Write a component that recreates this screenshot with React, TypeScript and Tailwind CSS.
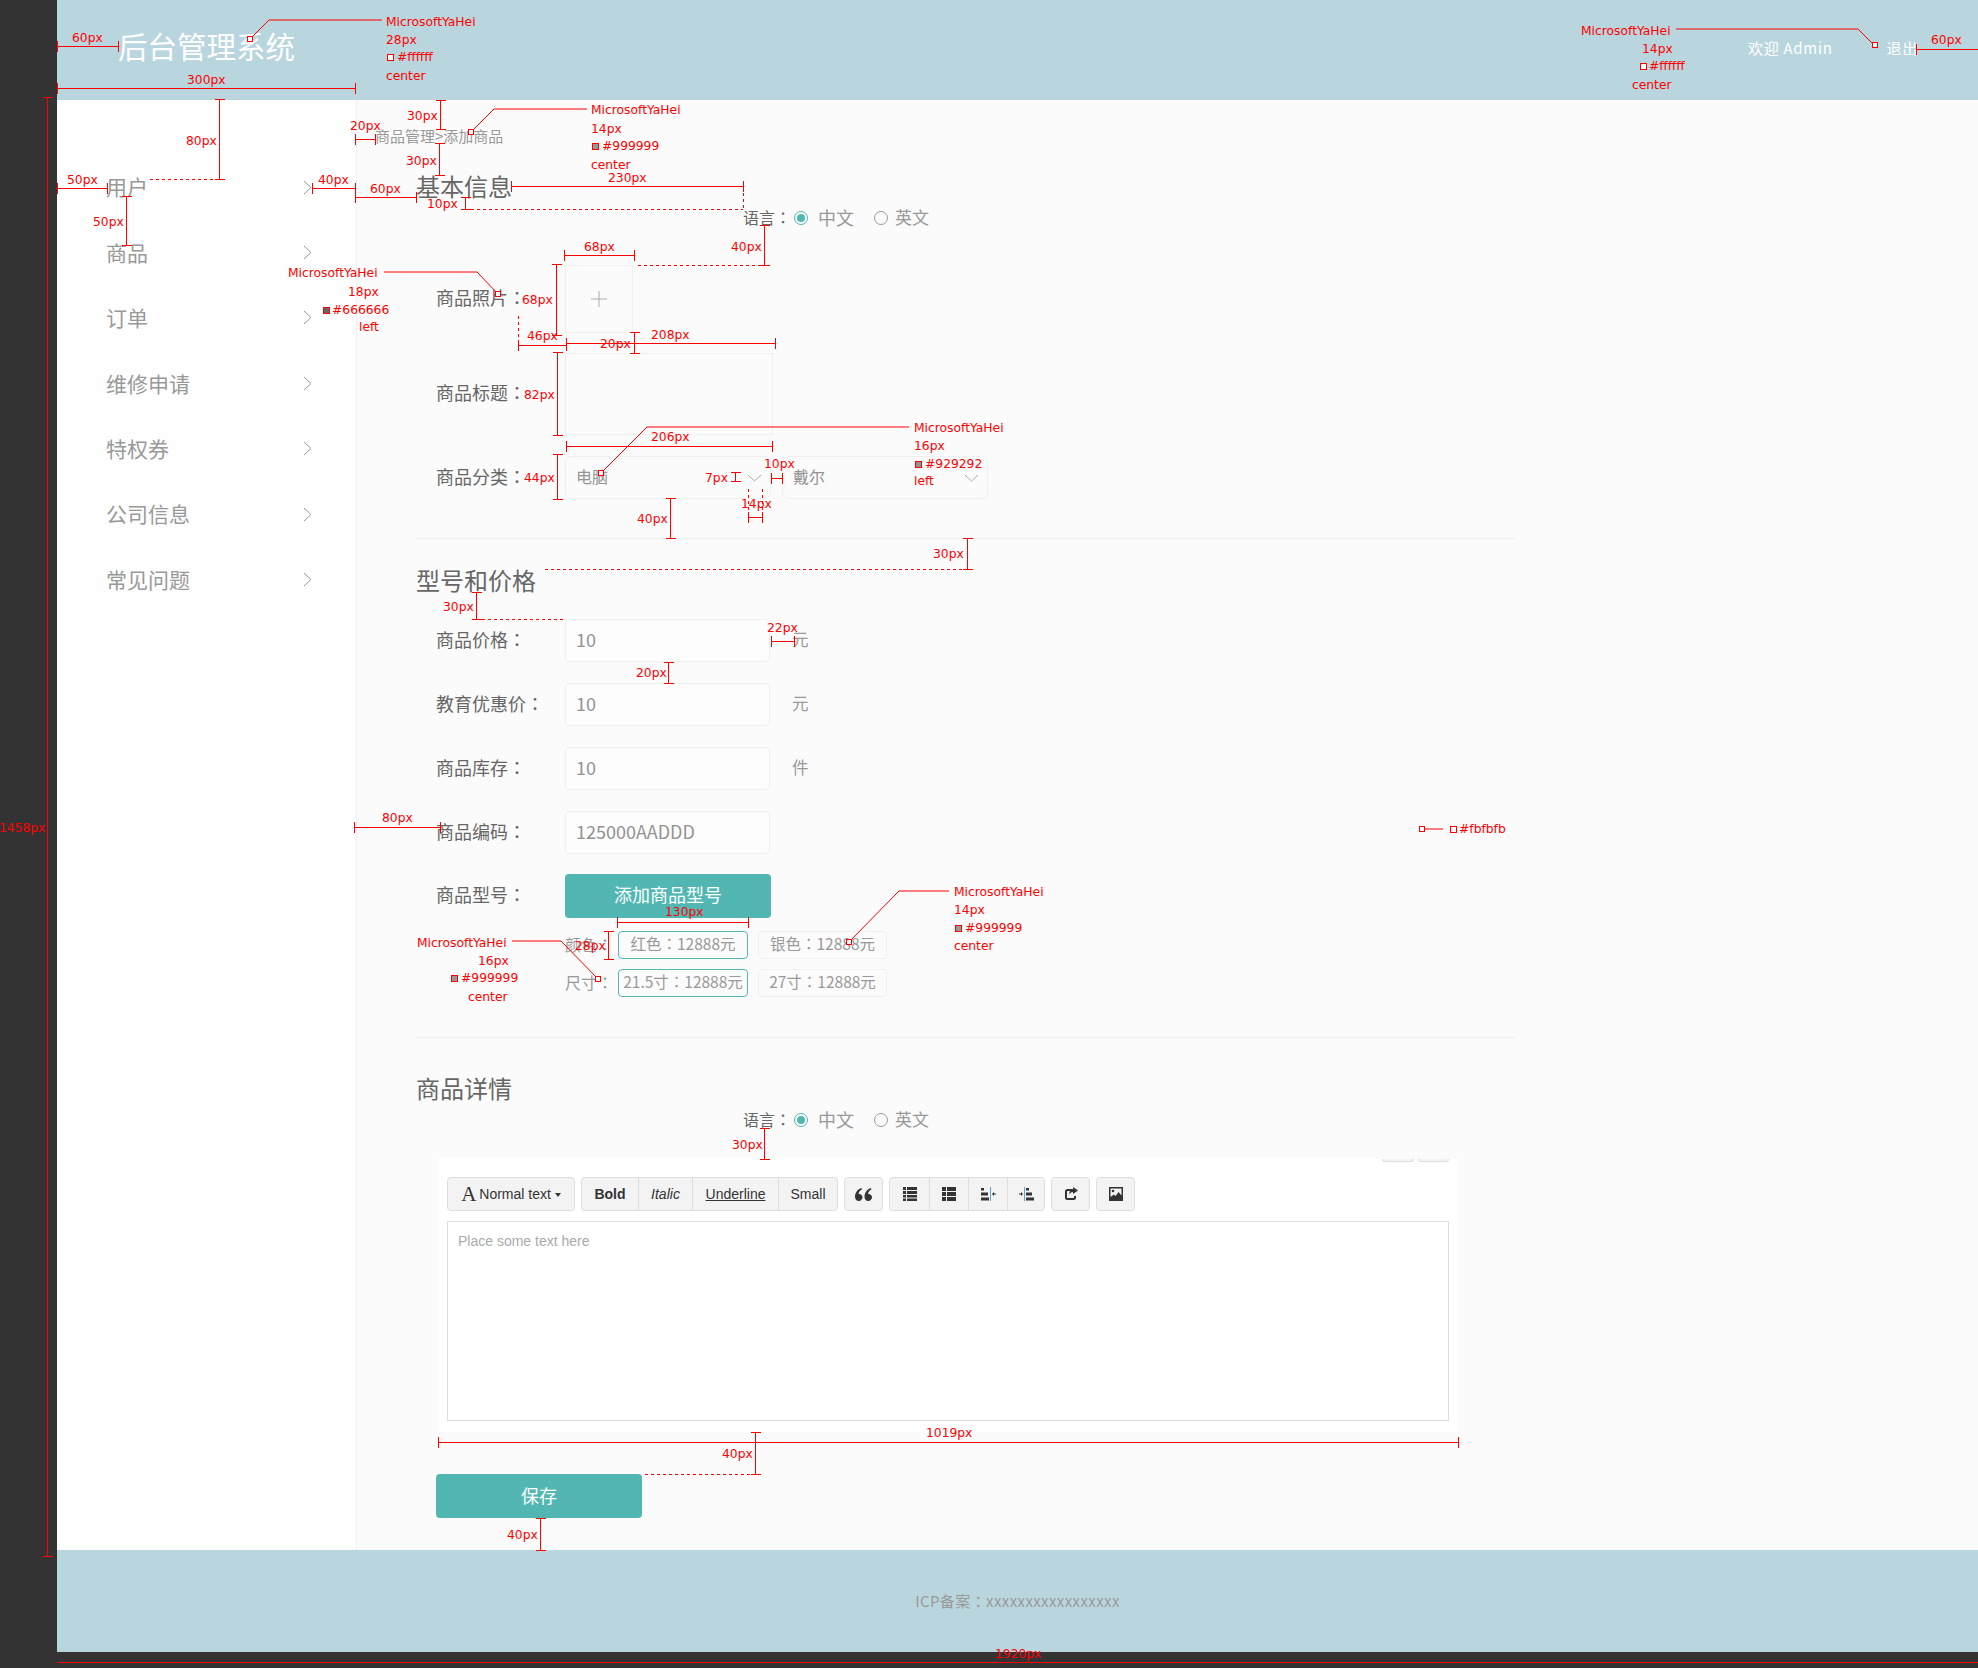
import React from 'react';

const sideItems = ['用户', '商品', '订单', '维修申请', '特权券', '公司信息', '常见问题'];

// red measuring marks laid over the design
type Label = [number, number, string];
const labels: Label[] = [
  [72, 38, '60px'], [386, 22, 'MicrosoftYaHei'], [386, 40, '28px'], [397, 57, '#ffffff'], [386, 76, 'center'], [187, 80, '300px'],
  [1581, 31, 'MicrosoftYaHei'], [1642, 49, '14px'], [1649, 66, '#ffffff'], [1632, 85, 'center'], [1931, 40, '60px'],
  [350, 126, '20px'], [407, 116, '30px'], [406, 161, '30px'], [591, 110, 'MicrosoftYaHei'], [591, 129, '14px'], [602, 146, '#999999'], [591, 165, 'center'],
  [67, 180, '50px'], [93, 222, '50px'], [186, 141, '80px'], [318, 180, '40px'], [370, 189, '60px'], [608, 178, '230px'], [427, 204, '10px'],
  [731, 247, '40px'], [584, 247, '68px'], [288, 273, 'MicrosoftYaHei'], [348, 292, '18px'], [332, 310, '#666666'], [359, 327, 'left'],
  [522, 300, '68px'], [527, 336, '46px'], [600, 344, '20px'], [651, 335, '208px'], [524, 395, '82px'], [651, 437, '206px'],
  [914, 428, 'MicrosoftYaHei'], [914, 446, '16px'], [925, 464, '#929292'], [914, 481, 'left'],
  [524, 478, '44px'], [705, 478, '7px'], [764, 464, '10px'], [741, 504, '14px'], [637, 519, '40px'], [933, 554, '30px'], [443, 607, '30px'],
  [767, 628, '22px'], [636, 673, '20px'], [382, 818, '80px'], [-1, 828, '1458px'], [1459, 829, '#fbfbfb'],
  [665, 912, '130px'], [575, 946, '28px'], [417, 943, 'MicrosoftYaHei'], [478, 961, '16px'], [461, 978, '#999999'], [468, 997, 'center'],
  [954, 892, 'MicrosoftYaHei'], [954, 910, '14px'], [965, 928, '#999999'], [954, 946, 'center'],
  [732, 1145, '30px'], [926, 1433, '1019px'], [722, 1454, '40px'], [507, 1535, '40px'], [995, 1654, '1920px'],
];

const hDims: [number, number, number][] = [
  [57, 118, 46], [57, 355, 88], [1916, 1978, 49], [355, 375, 139], [57, 107, 188], [312, 355, 188], [355, 416, 197], [511, 743, 186],
  [564, 634, 255], [518, 566, 345], [566, 775, 343], [566, 772, 446], [771, 782, 478], [748, 762, 517], [771, 794, 641], [354, 440, 827],
  [617, 748, 922], [438, 1458, 1442],
];
const vDims: [number, number, number][] = [
  [47, 97, 1556], [440, 100, 129], [439, 143, 175], [126, 196, 245], [219, 99, 179], [465, 197, 209], [764, 225, 265], [556, 264, 335], [634, 332, 353],
  [557, 352, 435], [557, 454, 499], [735, 472, 481], [670, 498, 538], [967, 538, 569], [476, 592, 619], [668, 662, 683], [608, 931, 959],
  [764, 1128, 1159], [755, 1432, 1474], [540, 1518, 1550],
];
const dashes: [number, number, number, number][] = [
  [150, 179, 219, 179], [465, 209, 743, 209], [743, 186, 743, 209], [638, 265, 764, 265], [518, 315, 518, 345], [748, 488, 748, 510], [762, 488, 762, 510],
  [545, 569, 966, 569], [476, 619, 563, 619], [645, 1474, 755, 1474],
];
const leaders: string[] = [
  '250,39 269,20 382,20', '1676,29 1858,29 1873,44', '471,132 494,109 587,109', '384,272 477,272 498,294',
  '601,473 647,427 909,427', '512,941 561,941 598,979', '849,942 899,891 949,891', '1424,829 1443,829',
];
const dots: [number, number][] = [[250, 39], [1875, 45], [471, 132], [498, 294], [601, 473], [598, 979], [849, 942], [1422, 829]];
const swatches: [number, number, string][] = [
  [390, 57, '#ffffff'], [1643, 66, '#ffffff'], [595, 146, '#999999'], [326, 310, '#666666'], [918, 464, '#929292'],
  [1453, 829, '#fbfbfb'], [454, 978, '#999999'], [958, 928, '#999999'],
];

const Annotations: React.FC = () => (
  <div className="absolute inset-0 pointer-events-none overflow-hidden">
    <svg width="1978" height="1668" className="absolute inset-0">
      <g stroke="#ff0000" strokeWidth="1" fill="none" shapeRendering="crispEdges">
        {hDims.map(([a, b, y], i) => (
          <path key={i} d={`M${a} ${y + 0.5}H${b}M${a + 0.5} ${y - 5}v11M${b + 0.5} ${y - 5}v11`} />
        ))}
        {vDims.map(([x, a, b], i) => (
          <path key={i} d={`M${x + 0.5} ${a}V${b}M${x - 4} ${a + 0.5}h10M${x - 4} ${b + 0.5}h10`} />
        ))}
        {dashes.map(([x1, y1, x2, y2], i) => (
          <line key={i} x1={x1} y1={y1 + 0.5} x2={x2} y2={y2 + 0.5} strokeDasharray="3 3" />
        ))}
        <path d="M57 1662.5H1978" />
      </g>
      <g stroke="#ff0000" strokeWidth="1" fill="none">
        {leaders.map((p, i) => (
          <polyline key={i} points={p} />
        ))}
      </g>
      <g stroke="#ff0000" strokeWidth="1" shapeRendering="crispEdges">
        {dots.map(([x, y], i) => (
          <rect key={i} x={x - 2.5} y={y - 2.5} width="5" height="5" fill="#fbfbfb" />
        ))}
        {swatches.map(([x, y, c], i) => (
          <rect key={i} x={x - 2.5} y={y - 2.5} width="6" height="6" fill={c} />
        ))}
      </g>
    </svg>
    {labels.map(([x, y, t], i) => (
      <span
        key={i}
        className="absolute -translate-y-1/2 whitespace-nowrap text-[12.3px] leading-none text-[#ff0000] font-['DejaVu_Sans',sans-serif]"
        style={{ left: x, top: y }}
      >
        {t}
      </span>
    ))}
  </div>
);

const Chevron: React.FC = () => (
  <svg width="9" height="15" viewBox="0 0 9 15" fill="none" stroke="#999" strokeWidth="1">
    <path d="M1 1l7 6.5L1 14" />
  </svg>
);

const Down: React.FC = () => (
  <svg width="15" height="8" viewBox="0 0 15 8" fill="none" stroke="#aaa" strokeWidth="1">
    <path d="M1 1l6.5 6L14 1" />
  </svg>
);

const Colon: React.FC = () => <span className="font-['Noto_Sans_CJK_TC',sans-serif]">：</span>;

const Heading: React.FC<{ children: React.ReactNode; className?: string }> = ({ children, className }) => (
  <h2 className={`h-8 text-[24px] leading-[30px] text-[#666] ${className}`}>{children}</h2>
);

const LangRow: React.FC = () => (
  <div className="h-6 mt-[3px] pb-[2px] ml-[327px] flex items-center text-[18px] text-[#999]">
    <span className="text-[16px] w-[51px] text-[#666]">语言<Colon /></span>
    <span className="w-[14px] h-[14px] mt-[2px] rounded-full border border-[#52b7b3] flex items-center justify-center">
      <span className="w-2 h-2 rounded-full bg-[#52b7b3]" />
    </span>
    <span className="ml-[10px]">中文</span>
    <span className="ml-5 mt-[2px] w-[14px] h-[14px] rounded-full border border-[#999]" />
    <span className="ml-[7px] text-[17px]">英文</span>
  </div>
);

const FormRow: React.FC<{ label: string; className?: string; children: React.ReactNode }> = ({ label, className, children }) => (
  <div className={`ml-5 flex items-center ${className}`}>
    <span className="w-[129px] shrink-0 pb-[3px] text-[18px] text-[#666]">{label}<Colon /></span>
    {children}
  </div>
);

const InputRow: React.FC<{ label: string; value: string; unit?: string }> = ({ label, value, unit }) => (
  <FormRow label={label}>
    <div className="w-[205px] h-[43px] px-[10px] pb-[2px] flex items-center rounded-[4px] border border-[#f0f0f0] bg-[#fdfdfd] text-[18px] text-[#929292]">{value}</div>
    {unit && <span className="ml-[22px] pb-[2px] text-[16.500px] text-[#999]">{unit}</span>}
  </FormRow>
);

const Select: React.FC<{ value: string; className?: string }> = ({ value, className }) => (
  <div className={`w-[206px] h-[43px] pl-[10px] pr-2 flex items-center justify-between rounded-[6px] border border-[#f0f0f0] text-[16px] text-[#929292] ${className}`}>
    <span className="pb-[3px]">{value}</span>
    <Down />
  </div>
);

const Chip: React.FC<{ name: string; price: string; active?: boolean }> = ({ name, price, active }) => (
  <span className={`h-7 pb-[2px] flex items-center justify-center rounded-[4px] border text-[15.500px] text-[#999] whitespace-nowrap ${active ? 'w-[130px] border-[#52b7b3]' : 'w-[129px] ml-[10px] border-[#f0f0f0]'}`}>
    {name}<Colon />{price}
  </span>
);

const ToolBtn: React.FC<{ children: React.ReactNode; className?: string }> = ({ children, className }) => (
  <span className={`h-full flex items-center justify-center border-l border-[#ddd] first:border-l-0 ${className}`}>{children}</span>
);

const ToolGroup: React.FC<{ children: React.ReactNode }> = ({ children }) => (
  <div className="h-full flex rounded-[4px] border border-[#ddd] bg-[#f3f3f3] text-[#333]">{children}</div>
);

// glyphicon style drawings
const IconQuote = () => (
  <svg width="17" height="13" viewBox="0 0 17 13" fill="#333">
    <path d="M4 6c2 0 3.500 1.500 3.500 3.300S6 13 3.800 13C1.500 13 0 11.300 0 8.800 0 4.500 2.800 1 6.500 0l.4 1.500C4.800 2.500 3.700 4 3.600 6z" />
    <path d="M13.500 6c2 0 3.500 1.500 3.500 3.300S15.500 13 13.300 13c-2.300 0-3.800-1.700-3.800-4.200C9.500 4.500 12.300 1 16 0l.4 1.500C14.300 2.500 13.200 4 13.100 6z" />
  </svg>
);
const IconList = () => (
  <svg width="14" height="14" viewBox="0 0 14 14" fill="#333"><path d="M0 0h3v3H0zM4 0h10v3H4zM0 4h3v3H0zM4 4h10v3H4zM0 8h3v2.500H0zM4 8h10v2.500H4zM0 11.500h3v2.500H0zM4 11.500h10v2.500H4z" /></svg>
);
const IconThList = () => (
  <svg width="14" height="14" viewBox="0 0 14 14" fill="#333"><path d="M0 0h4v4H0zM5 0h9v4H5zM0 5h4v4H0zM5 5h9v4H5zM0 10h4v4H0zM5 10h9v4H5z" /></svg>
);
const IconIndentL = () => (
  <svg width="15" height="14" viewBox="0 0 15 14" fill="#333"><path d="M0 1h3v2.500H0zM0 5.500h7v3H0zM0 10.500h8v3H0zM13 6.500h2v1h-2zM11 7l2-2v4z" /><path d="M9 0h1v14H9z" fill="#5aa5d8" /></svg>
);
const IconIndentR = () => (
  <svg width="15" height="14" viewBox="0 0 15 14" fill="#333"><path d="M7 1h3v2.500H7zM7 5.500h6v3H7zM7 10.500h8v3H7zM0 6.500h2v1H0zM4 7L2 5v4z" /><path d="M5 0h1v14H5z" fill="#5aa5d8" /></svg>
);
const IconShare = () => (
  <svg width="14" height="14" viewBox="0 0 14 14" fill="none" stroke="#333" strokeWidth="2"><path d="M8 3H3.500A1.500 1.500 0 0 0 2 4.500v6A1.500 1.500 0 0 0 3.500 12h6a1.500 1.500 0 0 0 1.500-1.500V9" /><path d="M9 0l5 3.500L9 7V5C7 5 6 6 5.500 8 5 5 6.500 2 9 2z" fill="#333" stroke="none" /></svg>
);
const IconPicture = () => (
  <svg width="14" height="14" viewBox="0 0 14 14"><path d="M0 0h14v14H0z" fill="#333" /><path d="M1.500 1.500h11v7L9.500 5 6.500 9 5 7.500 1.500 10z" fill="#f3f3f3" /><circle cx="4" cy="4" r="1.300" fill="#333" /></svg>
);

const Editor: React.FC = () => (
  <div className="w-[1020px] h-[273px] ml-[22px] mt-[27px] px-[9px] bg-white font-['Liberation_Sans',sans-serif] text-[14px]">
    <div className="h-[3px] flex justify-end gap-1">
      <span className="w-[32px] rounded-b-[3px] border-x border-b border-[#ddd] bg-[#f3f3f3]" />
      <span className="w-[31px] rounded-b-[3px] border-x border-b border-[#ddd] bg-[#f3f3f3]" />
    </div>
    <div className="h-[34px] mt-[15px] flex gap-[6px]">
      <ToolGroup>
        <ToolBtn className="w-[126px]">
          <span className="font-['Liberation_Serif',serif] text-[21px] leading-none mr-[3px]">A</span>
          Normal text
          <span className="ml-1 mt-[2px] border-x-[3.500px] border-t-[4px] border-x-transparent border-t-[#333]" />
        </ToolBtn>
      </ToolGroup>
      <ToolGroup>
        <ToolBtn className="w-[56px] font-bold">Bold</ToolBtn>
        <ToolBtn className="w-[54px] italic">Italic</ToolBtn>
        <ToolBtn className="w-[86px] underline">Underline</ToolBtn>
        <ToolBtn className="w-[59px]">Small</ToolBtn>
      </ToolGroup>
      <ToolGroup>
        <ToolBtn className="w-[37px]"><IconQuote /></ToolBtn>
      </ToolGroup>
      <ToolGroup>
        <ToolBtn className="w-[39px]"><IconList /></ToolBtn>
        <ToolBtn className="w-[39px]"><IconThList /></ToolBtn>
        <ToolBtn className="w-[39px]"><IconIndentL /></ToolBtn>
        <ToolBtn className="w-[37px]"><IconIndentR /></ToolBtn>
      </ToolGroup>
      <ToolGroup>
        <ToolBtn className="w-[37px]"><IconShare /></ToolBtn>
      </ToolGroup>
      <ToolGroup>
        <ToolBtn className="w-[37px]"><IconPicture /></ToolBtn>
      </ToolGroup>
    </div>
    <div className="h-[200px] mt-[10px] px-[10px] py-[9px] border border-[#ddd] text-[#aaa]">Place some text here</div>
  </div>
);

export default function App() {
  return (
    <div className="relative w-[1978px] h-[1668px] flex items-start bg-[#333] overflow-hidden font-['Noto_Sans_CJK_SC',sans-serif]">
      <div className="w-[57px] shrink-0" />
      <div className="w-[1921px] flex flex-col">
        <header className="h-[100px] pl-[61px] pr-[60px] flex items-center justify-between bg-[#b9d6de] text-white">
          <h1 className="text-[29.500px] leading-none -mt-[8px]">后台管理系统</h1>
          <div className="flex items-center pb-[3px] text-[15px] tracking-[0.7px]">
            <span>欢迎 Admin</span>
            <span className="ml-[54px]">退出</span>
          </div>
        </header>

        <div className="flex h-[1450px]">
          <nav className="w-[299px] shrink-0 pt-[54.500px] pl-[49px] pr-[44px] bg-[#fefefe]">
            {sideItems.map((item) => (
              <div key={item} className="h-[65.400px] flex items-center justify-between text-[21px] text-[#999]">
                {item}
                <Chevron />
              </div>
            ))}
          </nav>

          <main className="flex-1 pl-[18px] border-l border-[#f1f1f1] bg-[#fbfbfb]">
            <div className="h-5 mt-[26px] text-[15px] leading-5 text-[#999]">商品管理&gt;添加商品</div>

            <div className="ml-[41px] w-[1099px]">
              <Heading className="mt-[25px]">基本信息</Heading>
              <LangRow />

              <FormRow label="商品照片" className="mt-[35px]">
                <div className="w-[68px] h-[68px] flex items-center justify-center border border-[#f0f0f0]">
                  <svg width="16" height="16" viewBox="0 0 16 16" stroke="#aaa" strokeWidth="1"><path d="M8 0v16M0 8h16" /></svg>
                </div>
              </FormRow>
              <FormRow label="商品标题" className="mt-5">
                <div className="w-[208px] h-[82px] border border-[#f0f0f0]" />
              </FormRow>
              <FormRow label="商品分类" className="mt-[21px]">
                <Select value="电脑" />
                <Select value="戴尔" className="ml-[11px]" />
              </FormRow>

              <div className="h-px mt-[39px] bg-[#eeeeee]" />

              <Heading className="mt-[26px]">型号和价格</Heading>
              <div className="mt-[22px] flex flex-col gap-[21px]">
                <InputRow label="商品价格" value="10" unit="元" />
                <InputRow label="教育优惠价" value="10" unit="元" />
                <InputRow label="商品库存" value="10" unit="件" />
                <InputRow label="商品编码" value="125000AADDD" />
                <FormRow label="商品型号" className="-mt-px">
                  <button className="w-[206px] h-[44px] pb-[3px] rounded-[4px] bg-[#52b7b3] text-[18px] text-white">添加商品型号</button>
                </FormRow>
              </div>
              <div className="ml-[149px] mt-[13px] flex flex-col gap-[10px]">
                <div className="flex items-center">
                  <span className="w-[53px] pb-[2px] text-[16px] text-[#999]">颜色<Colon /></span>
                  <Chip name="红色" price="12888元" active />
                  <Chip name="银色" price="12888元" />
                </div>
                <div className="flex items-center">
                  <span className="w-[53px] pb-[2px] text-[16px] text-[#999]">尺寸<Colon /></span>
                  <Chip name="21.5寸" price="12888元" active />
                  <Chip name="27寸" price="12888元" />
                </div>
              </div>

              <div className="h-px mt-[40px] bg-[#eeeeee]" />

              <Heading className="mt-[35px]">商品详情</Heading>
              <LangRow />
              <Editor />

              <button className="block w-[206px] h-[44px] pb-[2px] ml-5 mt-[42px] rounded-[4px] bg-[#52b7b3] text-[18px] text-white">保存</button>
            </div>
          </main>
        </div>

        <footer className="h-[102px] flex items-center justify-center bg-[#b9d6de] text-[15px] text-[#999] tracking-[0.4px]">
          ICP备案<Colon />xxxxxxxxxxxxxxxxx
        </footer>
      </div>
      <Annotations />
    </div>
  );
}
